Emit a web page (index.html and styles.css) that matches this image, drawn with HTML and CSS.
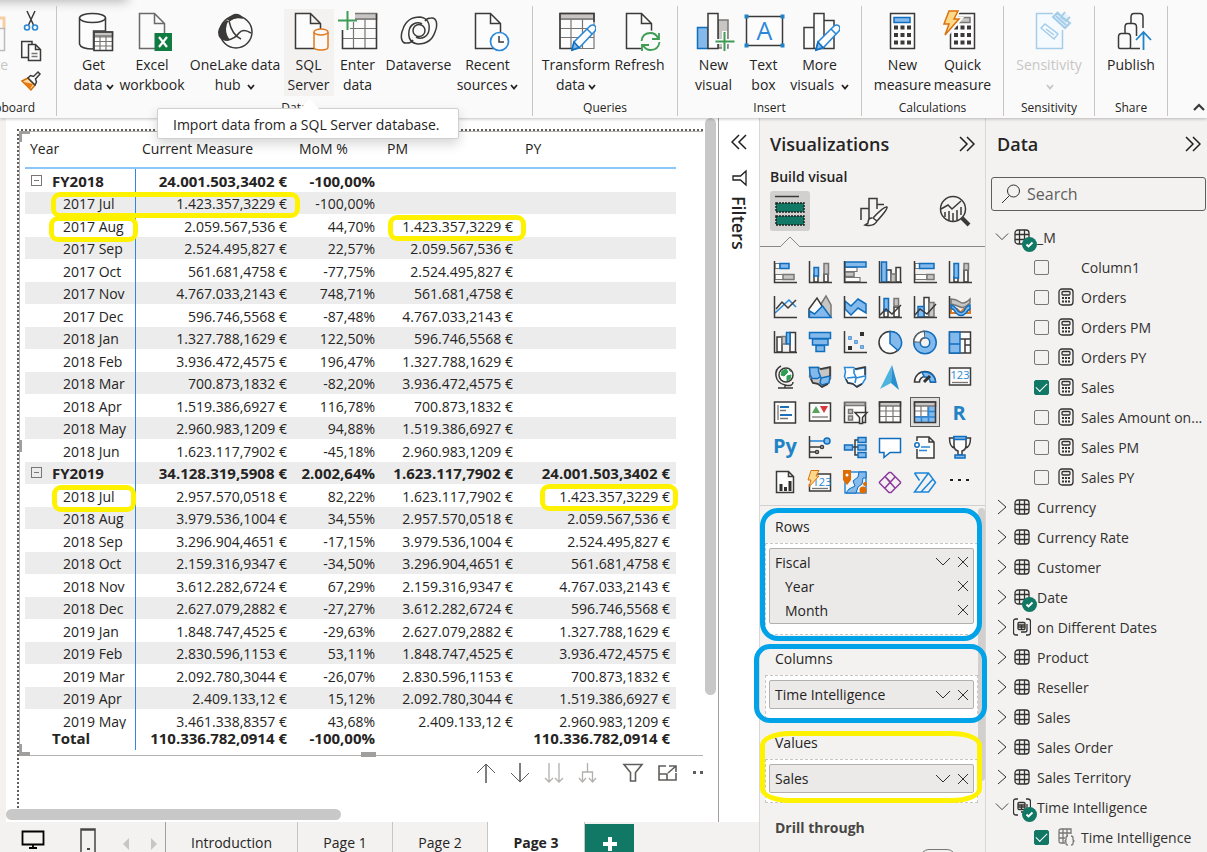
FILE: index.html
```html
<!DOCTYPE html>
<html lang="en">
<head>
<meta charset="utf-8">
<title>Power BI report</title>
<link rel="stylesheet" href="styles.css">
</head>
<body>
<svg class="defs" width="0" height="0" aria-hidden="true">
  <symbol id="page" viewBox="0 0 40 40"><path d="M7.5 1.5h15l10 10v25h-25zM22.5 1.5v10h10" class="k w"/></symbol>
  <symbol id="pencil" viewBox="0 0 40 40"><path d="M16 38l2-8L34 14q3-2 5 0t0 5L23 36z" class="blue w"/><path d="M16 38l2-8 5 5.500z" class="b"/><path d="M31 17l5 5" class="blue"/></symbol>
  <symbol id="table" viewBox="0 0 16 16"><rect x="1" y="1" width="14" height="14" rx="3" class="t"/><path d="M5.500 1v14M10.500 1v14M1 5.500h14M1 10.500h14" class="t"/></symbol>
  <symbol id="calc" viewBox="0 0 16 18"><rect x="1" y="1" width="14" height="16" rx="3" class="t"/><rect x="4" y="3.500" width="8" height="3.500" rx="1" class="t"/><path d="M4 10h2M7 10h2M10 10h2M4 13.500h2M7 13.500h2M10 13.500h2" class="t dots"/></symbol>
  <symbol id="group" viewBox="0 0 18 18"><path d="M5 1H3q-2.500 0-2.500 2.500v11Q.500 17 3 17h2M13 1h2q2.500 0 2.500 2.500v11q0 2.500-2.500 2.500h-2" class="t"/><rect x="5" y="4.500" width="7" height="7" rx="1" class="t"/><path d="M5 7h7M5 9h7M8.500 7v5M14 6v6q0 2-2 2H8" class="t"/></symbol>
  <symbol id="badge" viewBox="0 0 15 15"><circle cx="7.500" cy="7.500" r="7.500" fill="#117865"/><path d="M4.500 7.500l2 2 4-4" fill="none" stroke="#fff" stroke-width="1.800"/></symbol>
  <symbol id="right" viewBox="0 0 14 18"><path d="M3 2l8 7-8 7" class="thin"/></symbol>
  <symbol id="down" viewBox="0 0 16 12"><path d="M1 2l7 7 7-7" class="thin"/></symbol>
  <symbol id="close" viewBox="0 0 12 12"><path d="M1 1l10 10M11 1L1 11" class="thin"/></symbol>
  <symbol id="forward" viewBox="0 0 16 16"><path d="M1 1l7 7-7 7M8 1l7 7-7 7" fill="none" stroke="#201f1e" stroke-width="1.500"/></symbol>
  <symbol id="caret" viewBox="0 0 8 6"><path d="M1 1l3 3.500L7 1" fill="none" stroke="currentColor" stroke-width="1.800"/></symbol>
  <symbol id="axes" viewBox="0 0 24 24"><path d="M1.500 1v21.500H24" class="k"/></symbol>
</svg>

<header class="ribbon">
  <section class="group clip">
    <div class="tools">
      <button class="paste" disabled><svg class="big" viewBox="0 0 40 40"><path d="M2 6h32v12M2 6v28" fill="none" stroke="#f5cfa3" stroke-width="3"/><path d="M24 16.500h10.500v22H18v-22z" fill="#fafafa" stroke="#bbb" stroke-width="1.500"/></svg><span>Paste</span></button>
      <div class="small-tools">
        <button aria-label="Cut"><svg width="20" height="22" viewBox="0 0 20 22"><path d="M6 1l6.500 14M14 1L7.500 15" class="k"/><circle cx="6" cy="17.500" r="2.500" class="blue"/><circle cx="14" cy="17.500" r="2.500" class="blue"/></svg></button>
        <button aria-label="Copy"><svg width="20" height="22" viewBox="0 0 20 22"><path d="M7 17.500H.700V1.500H11v3" class="k"/><path d="M7.500 4.500h7l5 5v11h-12zM14.500 4.500v5h5" class="k w"/><path d="M10.500 13.500h6M10.500 16.500h6" class="gr"/></svg></button>
        <button aria-label="Format painter"><svg width="20" height="22" viewBox="0 0 20 22"><path d="M1 11l6-3 7 7-4 5z" fill="#fbd9a8" stroke="#d86c00" stroke-width="1.500"/><path d="M3 12l9 2-3 5z" fill="#e87a10"/><path d="M7 8l2.500-2.500 3 1L17 2l2 2-4.500 5 1 3L14 15z" class="k w"/></svg></button>
      </div>
    </div>
    <h2>Clipboard</h2>
  </section>
  <section class="group data-group">
    <div class="tools">
      <button class="w48"><svg class="big" viewBox="0 0 40 40"><path d="M5.500 6v26c1 4 6 5 14 5V19h12V6" class="k w"/><ellipse cx="18.500" cy="6" rx="13" ry="4.500" class="k w"/><path d="M20 20h18.500v18.500H20zM20 25h18.500M20 29.500h18.500M20 34h18.500M26 24v14M32 24v14" class="kg w"/><path d="M20 20h18.500v4H20z" class="g"/><path d="M20 20h18.500v18.500H20z" class="k"/></svg><span>Get<br>data<svg class="caret"><use href="#caret"/></svg></span></button>
      <button class="w69"><svg class="big" viewBox="0 0 40 40"><g class="lite"><use href="#page" width="40" height="40"/></g><rect x="22.500" y="21" width="17.500" height="18" fill="#107c41"/><path d="M27 25l8 10M35 25l-8 10" stroke="#fff" stroke-width="2.200"/></svg><span>Excel<br>workbook</span></button>
      <button class="w97"><svg class="big" viewBox="0 0 40 40"><circle cx="21" cy="20" r="16" class="k"/><path d="M12 8Q4 13 3 20q0 8 8 9 2 0 4-1-4-5-4-11 0-5 3-9zM12 8q2-4 7-6 6-1 9 4-8-1-14 4z" fill="#3b3a39"/><path d="M14 9q3 14 12 18M12 28q8-1 12-7 4-5 12 0M14 9q5-5 14-3" class="k"/></svg><span>OneLake data<br>hub <svg class="caret"><use href="#caret"/></svg></span></button>
      <button class="w50 hover"><svg class="big" viewBox="0 0 40 40"><use href="#page" width="40" height="40" x="-1"/><path d="M25 20v15c0 4 14 4 14 0V20" fill="#faf9f8" stroke="#e07a1f" stroke-width="1.500"/><ellipse cx="32" cy="20" rx="7" ry="3" fill="#faf9f8" stroke="#e07a1f" stroke-width="1.500"/></svg><span>SQL<br>Server</span></button>
      <button class="w48"><svg class="big" viewBox="0 0 40 40"><path d="M4.500 1.500h34v35h-34zM4.500 7h34M4.500 16.500h34M4.500 26.500h34M15.500 7v29M27 7v29" class="kg w"/><path d="M4.500 1.500h34V7h-34z" class="g"/><path d="M4.500 10v26.500h34v-35" class="k"/><path d="M0-3h17v13h-5v8H3V10H0z" fill="#fafafa"/><path d="M9.500-1v19M0 8.500h19" stroke="#3f9c55" stroke-width="2"/></svg><span>Enter<br>data</span></button>
      <button class="w74"><svg class="big" viewBox="0 0 40 40"><circle cx="20" cy="18.500" r="6" class="k"/><path d="M8 31C2 32 1 24 4 17 7 8 14 5 21 5c7 1 10 6 9 13-1 7-8 10-13 7M32 6c6-1 7 7 4 14-3 9-10 12-17 12-7-1-10-6-9-13 1-7 8-10 13-7M8 31q4 0 6-3M32 6q-4 0-6 3" class="k"/></svg><span>Dataverse</span></button>
      <button class="w64"><svg class="big" viewBox="0 0 40 40"><use href="#page" width="40" height="40"/><circle cx="31.500" cy="29.500" r="9" fill="#fff" stroke="#2b88d8" stroke-width="1.700"/><path d="M31 24v6h5" class="k"/></svg><span>Recent<br>sources<svg class="caret"><use href="#caret"/></svg></span></button>
    </div>
    <h2>Data</h2>
    <div class="tooltip" role="tooltip">Import data from a SQL Server database.</div>
  </section>
  <section class="group g145">
    <div class="tools">
      <button class="w69"><svg class="big" viewBox="0 0 40 40"><path d="M4 1.500h34v35H4zM4 7h34M4 16.500h34M4 25.500h34M15 7v29M26.500 7v29" class="kg w"/><path d="M4 1.500h34V7H4z" class="g"/><path d="M38 10V1.500H4v35h14" class="k"/><use href="#pencil" width="40" height="40"/></svg><span>Transform<br>data<svg class="caret"><use href="#caret"/></svg></span></button>
      <button class="w58"><svg class="big" viewBox="0 0 40 40"><use href="#page" width="40" height="40" x="-1"/><circle cx="30" cy="29.500" r="11" fill="#fafafa"/><path d="M21.500 29q1-8 9-8 5 0 7.500 5M39 21v6h-7M39.500 30q-1 8-9 8-5 0-7.500-5M22 39v-6h7" fill="none" stroke="#3f9c55" stroke-width="1.800"/></svg><span>Refresh</span></button>
    </div>
    <h2>Queries</h2>
  </section>
  <section class="group g184">
    <div class="tools">
      <button class="w50"><svg class="big" viewBox="0 0 40 40"><path d="M3.500 15.500H14v21H3.500z" class="b"/><path d="M24 8h10v28H24z" class="g"/><path d="M14 1.500h10v35H14z" class="k w"/><path d="M21 29.500h20M30.500 19v22" stroke="#fafafa" stroke-width="5"/><path d="M21.500 29.500h19M30.500 20v19" stroke="#3f9c55" stroke-width="2"/></svg><span>New<br>visual</span></button>
      <button class="w50"><svg class="big" viewBox="0 0 40 40"><path d="M2.500 4.500h36v29h-36z" class="k w"/><text x="20.500" y="28" text-anchor="middle" class="letter">A</text><path d="M.500 2.500h4v4h-4zM36.500 2.500h4v4h-4zM.500 31.500h4v4h-4zM36.500 31.500h4v4h-4z" fill="#1e83c9"/></svg><span>Text<br>box</span></button>
      <button class="w62"><svg class="big" viewBox="0 0 40 40"><path d="M4 15.500h10v21H4zM24 8.500h10v28H24zM14 1.500h10v35H14z" class="k w"/><use href="#pencil" width="40" height="40"/></svg><span>More<br>visuals <svg class="caret"><use href="#caret"/></svg></span></button>
    </div>
    <h2>Insert</h2>
  </section>
  <section class="group g142">
    <div class="tools">
      <button class="w60"><svg class="big" viewBox="0 0 40 40"><path d="M7.500 1.500h24v35h-24z" class="k w"/><path d="M11 5.500h16v5H11z" class="b"/><path d="M11 15.500h17M11 23h17M11 30.500h17" class="keys"/></svg><span>New<br>measure</span></button>
      <button class="w60"><svg class="big" viewBox="0 0 40 40"><path d="M7.500 1.500h24v35h-24z" class="k w"/><path d="M15 5.500h12v5H15z" class="g"/><path d="M11 15.500h17M11 23h17M11 30.500h17" class="keys"/><path d="M5-1h10l-4 8h6L2 25l4-12H0z" fill="#ffd98a" stroke="#fafafa" stroke-width="4"/><path d="M6-1h9l-4 8h5L2 23l4-11H1z" fill="#ffd98a" stroke="#d9730d" stroke-width="1.500"/></svg><span>Quick<br>measure</span></button>
    </div>
    <h2>Calculations</h2>
  </section>
  <section class="group g91">
    <div class="tools">
      <button class="w74" disabled><svg class="big" viewBox="0 0 40 40"><path d="M24 1.500H7.500v35h26V18" fill="#f5faff" stroke="#a5cde9" stroke-width="1.500"/><path d="M12 16l4-4 13 10-4 5zM17 17l8 6" fill="none" stroke="#a5cde9" stroke-width="1.500"/><path d="M24 5l4-4 13 10-5 5zM28 0l4 4M36 0l-4 5 5 4 4-4M27 4l10 9" fill="#e6f2fb" stroke="#a5cde9" stroke-width="2"/></svg><span>Sensitivity<br><svg class="caret"><use href="#caret"/></svg></span></button>
    </div>
    <h2>Sensitivity</h2>
  </section>
  <section class="group g73">
    <div class="tools">
      <button class="w60"><svg class="big" viewBox="0 0 40 40"><path d="M20 11V5q0-3.500 3-3.500h6q3 0 3 3.500v11M14 21v-6q0-3.500 3-3.500h5q3.500 0 3.500 3.500v9M7.500 35V25q0-3.500 3-3.500h6q3 0 3 3.500v10q0 1.500-1.500 1.500h-9q-1.500 0-1.500-1.500zM19 36.500h10" class="k"/><path d="M32.500 38V21M25 28l7.500-8 7.500 8" fill="none" stroke="#1e83c9" stroke-width="1.800"/></svg><span>Publish</span></button>
    </div>
    <h2>Share</h2>
  </section>
  <button class="collapse" aria-label="Collapse ribbon"><svg width="12" height="8" viewBox="0 0 12 8"><path d="M1 7l5-5 5 5" fill="none" stroke="#3b3a39" stroke-width="2.200"/></svg></button>
</header>

<main class="workspace">
  <div class="report">
    <div class="stage">
      <div class="canvas">
        <div class="sheet">
          <div class="visual">
            <table class="matrix">
              <colgroup><col class="c-year"><col class="c-cur"><col class="c-mom"><col class="c-pm"><col></colgroup>
              <thead><tr><th>Year</th><th>Current Measure</th><th>MoM %</th><th>PM</th><th>PY</th></tr></thead>
              <tbody>
                <tr class="year"><th><button class="minus" aria-label="Collapse FY2018"></button>FY2018</th><td>24.001.503,3402 €</td><td>-100,00%</td><td></td><td></td></tr>
                <tr><th>2017 Jul</th><td>1.423.357,3229 €</td><td>-100,00%</td><td></td><td></td></tr>
                <tr><th>2017 Aug</th><td>2.059.567,536 €</td><td>44,70%</td><td>1.423.357,3229 €</td><td></td></tr>
                <tr><th>2017 Sep</th><td>2.524.495,827 €</td><td>22,57%</td><td>2.059.567,536 €</td><td></td></tr>
                <tr><th>2017 Oct</th><td>561.681,4758 €</td><td>-77,75%</td><td>2.524.495,827 €</td><td></td></tr>
                <tr><th>2017 Nov</th><td>4.767.033,2143 €</td><td>748,71%</td><td>561.681,4758 €</td><td></td></tr>
                <tr><th>2017 Dec</th><td>596.746,5568 €</td><td>-87,48%</td><td>4.767.033,2143 €</td><td></td></tr>
                <tr><th>2018 Jan</th><td>1.327.788,1629 €</td><td>122,50%</td><td>596.746,5568 €</td><td></td></tr>
                <tr><th>2018 Feb</th><td>3.936.472,4575 €</td><td>196,47%</td><td>1.327.788,1629 €</td><td></td></tr>
                <tr><th>2018 Mar</th><td>700.873,1832 €</td><td>-82,20%</td><td>3.936.472,4575 €</td><td></td></tr>
                <tr><th>2018 Apr</th><td>1.519.386,6927 €</td><td>116,78%</td><td>700.873,1832 €</td><td></td></tr>
                <tr><th>2018 May</th><td>2.960.983,1209 €</td><td>94,88%</td><td>1.519.386,6927 €</td><td></td></tr>
                <tr><th>2018 Jun</th><td>1.623.117,7902 €</td><td>-45,18%</td><td>2.960.983,1209 €</td><td></td></tr>
                <tr class="year"><th><button class="minus" aria-label="Collapse FY2019"></button>FY2019</th><td>34.128.319,5908 €</td><td>2.002,64%</td><td>1.623.117,7902 €</td><td>24.001.503,3402 €</td></tr>
                <tr><th>2018 Jul</th><td>2.957.570,0518 €</td><td>82,22%</td><td>1.623.117,7902 €</td><td>1.423.357,3229 €</td></tr>
                <tr><th>2018 Aug</th><td>3.979.536,1004 €</td><td>34,55%</td><td>2.957.570,0518 €</td><td>2.059.567,536 €</td></tr>
                <tr><th>2018 Sep</th><td>3.296.904,4651 €</td><td>-17,15%</td><td>3.979.536,1004 €</td><td>2.524.495,827 €</td></tr>
                <tr><th>2018 Oct</th><td>2.159.316,9347 €</td><td>-34,50%</td><td>3.296.904,4651 €</td><td>561.681,4758 €</td></tr>
                <tr><th>2018 Nov</th><td>3.612.282,6724 €</td><td>67,29%</td><td>2.159.316,9347 €</td><td>4.767.033,2143 €</td></tr>
                <tr><th>2018 Dec</th><td>2.627.079,2882 €</td><td>-27,27%</td><td>3.612.282,6724 €</td><td>596.746,5568 €</td></tr>
                <tr><th>2019 Jan</th><td>1.848.747,4525 €</td><td>-29,63%</td><td>2.627.079,2882 €</td><td>1.327.788,1629 €</td></tr>
                <tr><th>2019 Feb</th><td>2.830.596,1153 €</td><td>53,11%</td><td>1.848.747,4525 €</td><td>3.936.472,4575 €</td></tr>
                <tr><th>2019 Mar</th><td>2.092.780,3044 €</td><td>-26,07%</td><td>2.830.596,1153 €</td><td>700.873,1832 €</td></tr>
                <tr><th>2019 Apr</th><td>2.409.133,12 €</td><td>15,12%</td><td>2.092.780,3044 €</td><td>1.519.386,6927 €</td></tr>
                <tr class="cut"><th><span>2019 May</span></th><td><span>3.461.338,8357 €</span></td><td><span>43,68%</span></td><td><span>2.409.133,12 €</span></td><td><span>2.960.983,1209 €</span></td></tr>
              </tbody>
              <tfoot><tr><th>Total</th><td>110.336.782,0914 €</td><td>-100,00%</td><td></td><td>110.336.782,0914 €</td></tr></tfoot>
            </table>
            <i class="handle tl"></i><i class="handle bl"></i><i class="handle bm"></i><i class="handle lm"></i>
            <i class="mark m1"></i><i class="mark m2"></i><i class="mark m3"></i><i class="mark m4"></i><i class="mark m5"></i>
          </div>
          <div class="visual-tools">
            <button aria-label="Drill up"><svg width="20" height="20" viewBox="0 0 20 20"><path d="M10 20V1" class="arr2"/><path d="M1 10l9-9 9 9" class="arr"/></svg></button>
            <button aria-label="Drill down"><svg width="20" height="20" viewBox="0 0 20 20"><path d="M10 0v19" class="arr2"/><path d="M1 10l9 9 9-9" class="arr"/></svg></button>
            <button aria-label="Next level"><svg width="20" height="20" viewBox="0 0 20 20"><path d="M5 0v19M15 0v19M1 15l4 4 4-4M11 15l4 4 4-4" class="arr pale"/></svg></button>
            <button aria-label="Expand all"><svg width="20" height="20" viewBox="0 0 20 20"><path d="M9.500 0v9M4.500 19V9h10v10M1 15l3.500 4L8 15M11 15l3.500 4 3.500-4" class="arr pale"/></svg></button>
            <button aria-label="Filters" class="gap"><svg width="20" height="20" viewBox="0 0 20 20"><path d="M1 1.500h18l-6.500 8V18h-5V9.500z" class="arr2"/></svg></button>
            <button aria-label="Focus mode"><svg width="20" height="20" viewBox="0 0 20 20"><path d="M9 3H2v14h17v-7M2 11h8v6M12 3h7v6M19 3l-8 7" class="arr2"/></svg></button>
            <button aria-label="More options"><svg width="20" height="20" viewBox="0 0 20 20"><path d="M2 9.500h3M9 9.500h3M16 9.500h3" stroke="#605e5c" stroke-width="3"/></svg></button>
          </div>
        </div>
        <div class="vscroll"><i></i></div>
        <div class="hscroll"><i></i></div>
      </div>
      <aside class="filters">
        <button aria-label="Expand filters"><svg class="flip" width="16" height="16"><use href="#forward"/></svg></button>
        <svg width="16" height="16" viewBox="0 0 16 16"><path d="M15 1v14L9.500 10H2V6h7.500z" fill="none" stroke="#201f1e" stroke-width="1.300"/></svg>
        <h2>Filters</h2>
      </aside>
    </div>
    <nav class="pages">
      <button class="view" aria-label="Desktop layout"><svg width="24" height="20" viewBox="0 0 24 20"><path d="M1.500 1.500h21v13h-21zM12 15v3M8 18h8" fill="none" stroke="#000" stroke-width="1.800"/></svg></button>
      <button class="view phone" aria-label="Mobile layout"><svg width="16" height="26" viewBox="0 0 16 26"><path d="M1 1h14v24H1zM1 2h14" fill="none" stroke="#484644" stroke-width="1.500"/><path d="M7 21h3" stroke="#484644" stroke-width="2"/></svg></button>
      <button class="step" aria-label="Previous page"><svg width="6" height="12" viewBox="0 0 6 12"><path d="M6 0v12L0 6z" fill="#c8c6c4"/></svg></button>
      <button class="step" aria-label="Next page"><svg width="6" height="12" viewBox="0 0 6 12"><path d="M0 0v12l6-6z" fill="#c8c6c4"/></svg></button>
      <a class="tab intro" href="#introduction">Introduction</a>
      <a class="tab" href="#page1">Page 1</a>
      <a class="tab" href="#page2">Page 2</a>
      <a class="tab current" href="#page3">Page 3</a>
      <button class="add" aria-label="New page"><svg width="14" height="14" viewBox="0 0 14 14"><path d="M7 0v14M0 7h14" stroke="#fff" stroke-width="4"/></svg></button>
    </nav>
  </div>

  <aside class="panel viz">
    <header class="panel-head"><h1>Visualizations</h1><button aria-label="Collapse"><svg width="16" height="16"><use href="#forward"/></svg></button></header>
    <h2 class="sub">Build visual</h2>
    <div class="modes">
      <button class="on" aria-label="Build visual"><svg width="40" height="40" viewBox="0 0 40 40"><path d="M5 5.500h24" class="k"/><path d="M6 12h28v9H6zM6 25h28v9H6z" fill="#117865" stroke="#201f1e" stroke-width="1.500" stroke-dasharray="2 1"/></svg></button>
      <button aria-label="Format visual"><svg width="40" height="40" viewBox="0 0 40 40"><path d="M8 29V17.500h8V31M16 23V7.500h8V18M24 13.500h7" class="k"/><path d="M34 16q1 2-10 14l-4-3Q31 15 34 16zM19 27q-4 0-4 5l-3 2q9 2 12-4" class="k w"/></svg></button>
      <button aria-label="Analytics"><svg width="40" height="40" viewBox="0 0 40 40"><circle cx="18" cy="18" r="12.500" class="k"/><path d="M6 18l7-4 4 4 9-8M10 21v5M14 20v9M18 22v8M22 19v10M26 16v8" class="k"/><path d="M27 27l7 7" stroke="#3b3a39" stroke-width="4"/></svg></button>
      <svg class="notch" width="22" height="11" viewBox="0 0 22 11"><path d="M0 10.500h1.500L11 1l9.500 9.500H22" fill="#f3f2f1" stroke="#8a8886"/><path d="M2 10.500h18" stroke="#f3f2f1"/></svg>
    </div>
    <div class="gallery">
      <button aria-label="Stacked bar chart"><svg viewBox="0 0 24 24"><path d="M2 3.500h5v5H2zM2 14.500h9v5H2z" class="kg w"/><path d="M7 3.500h9v5H7z" class="b"/><path d="M10 14.500h11v5H10z" class="g"/><use href="#axes"/></svg></button>
      <button aria-label="Stacked column chart"><svg viewBox="0 0 24 24"><path d="M6 15h4v7H6zM16 14h4v8h-4z" class="k w"/><path d="M6 7.500h4.500V16H6z" class="b"/><path d="M16 3.500h4.500V14H16z" class="g"/><use href="#axes"/></svg></button>
      <button aria-label="Clustered bar chart"><svg viewBox="0 0 24 24"><path d="M2 7.500h12v4H2zM2 17.500h15v4H2z" class="kg w"/><path d="M2 2h21v5H2z" class="b"/><path d="M2 12h9v4.500H2z" class="g"/><use href="#axes"/></svg></button>
      <button aria-label="Clustered column chart"><svg viewBox="0 0 24 24"><path d="M8.500 10H13v12H8.500zM18 7.500h4.500V22H18z" class="k w"/><path d="M3.500 2h5v20h-5z" class="b"/><path d="M13 14h4.500v8H13z" class="g"/><use href="#axes"/></svg></button>
      <button aria-label="100% stacked bar chart"><svg viewBox="0 0 24 24"><path d="M2 3.500h5v5H2zM2 14.500h12v5H2z" class="kg w"/><path d="M6.500 3.500H21v5H6.500z" class="b"/><path d="M14 14.500h7v5h-7z" class="g"/><use href="#axes"/></svg></button>
      <button aria-label="100% stacked column chart"><svg viewBox="0 0 24 24"><path d="M6 17h4v5H6zM16 10h4v12h-4z" class="k w"/><path d="M6 3.500h4.500V18H6z" class="b"/><path d="M16 3.500h4.500V10H16z" class="g"/><use href="#axes"/></svg></button>

      <button aria-label="Line chart"><svg viewBox="0 0 24 24"><path d="M2 18L16 5l7 7" class="blue"/><path d="M3 14l6-7 6 6 8-8" class="k"/><use href="#axes"/></svg></button>
      <button aria-label="Area chart"><svg viewBox="0 0 24 24"><path d="M13 22V9l5-8 5 9v12z" class="g"/><path d="M1 14L9 3l12 19H1z" class="k w"/><path d="M1.500 16l5 3 8-8 8.500 11.500H1.500z" class="b"/></svg></button>
      <button aria-label="Stacked area chart"><svg viewBox="0 0 24 24"><path d="M2 15l6 6 7-7 8 6v2H2z" class="w"/><path d="M2 6l6 5 7-7 8 5v9l-8-5-7 7-6-6z" class="b"/><use href="#axes"/></svg></button>
      <button aria-label="Line and stacked column chart"><svg viewBox="0 0 24 24"><path d="M6 14h4v8H6zM16 12h5v10h-5z" class="k w"/><path d="M6 3.500h4.500V16H6z" class="b"/><path d="M16 3.500h4.500V11H16z" class="g"/><path d="M2 20l6-6 6 5 9-9" class="k"/><use href="#axes"/></svg></button>
      <button aria-label="Line and clustered column chart"><svg viewBox="0 0 24 24"><path d="M11 2.500h5V22h-5z" class="k w"/><path d="M5 11.500h6V22H5z" class="b"/><path d="M16 7.500h5V22h-5z" class="g"/><path d="M2 20l5-6 7 5 9-10" class="k"/><use href="#axes"/></svg></button>
      <button aria-label="Ribbon chart"><svg viewBox="0 0 24 24"><path d="M3 14h6l4 4h9v-4h-6l-4 4H3z" fill="#fff" stroke="#e07a1f" stroke-width="2"/><path d="M3 4q5 0 9 3t10-3v4q-6 6-10 4T3 9z" class="g"/><path d="M3 10q4 1 7 6 3 3 6 0 2-5 6-6v4q-2 1-4 4-5 5-10 0-2-4-5-5z" class="b"/><use href="#axes"/></svg></button>

      <button aria-label="Waterfall chart"><svg viewBox="0 0 24 24"><path d="M4 7h5v15H4zM17 2.500h5.500V22H17z" class="k w"/><path d="M9 6.500h4V14H9z" class="g"/><path d="M13.500 2.500H17V14h-3.500z" class="b"/><use href="#axes"/></svg></button>
      <button aria-label="Funnel chart"><svg viewBox="0 0 24 24"><path d="M1.500 2.500h21v6h-21zM4.500 9h15.500v6H4.500zM8 15.500h8.500v6H8z" class="b"/></svg></button>
      <button aria-label="Scatter chart"><svg viewBox="0 0 24 24"><path d="M17 2h4v4h-4zM5 16h4v4H5z" fill="#323130"/><path d="M5.500 6.500h3v3h-3zM11.500 10.500h3v3h-3zM17.500 15.500h3v3h-3z" class="b soft"/><use href="#axes"/></svg></button>
      <button aria-label="Pie chart"><svg viewBox="0 0 24 24"><circle cx="12" cy="12.500" r="11" class="k w"/><path d="M12 1.500a11 11 0 0 1 8 19l-8-7z" class="b"/></svg></button>
      <button aria-label="Donut chart"><svg viewBox="0 0 24 24"><circle cx="12" cy="12.500" r="8" fill="none" stroke="#106ebe" stroke-width="8"/><circle cx="12" cy="12.500" r="8" fill="none" stroke="#83b9eb" stroke-width="5"/><path d="M4 12.500A8 8 0 0 1 12 4.500" fill="none" stroke="#605e5c" stroke-width="8"/><path d="M4 11.500A8 8 0 0 1 11 4.500" fill="none" stroke="#fff" stroke-width="5"/></svg></button>
      <button aria-label="Treemap"><svg viewBox="0 0 24 24"><path d="M1.500 2h21v21h-21zM12 9h11M17 9v14M17 15h6" class="k w"/><path d="M1.500 2H12v12H1.500zM1.500 14H12v9H1.500z" class="b"/></svg></button>

      <button aria-label="Map"><svg viewBox="0 0 24 24"><circle cx="13" cy="10" r="7" class="k w"/><path d="M9 6l4-2 2 3-4 4-3-1zM14 11l4-1-1 4-3 2zM16 5l2 2" fill="#2f9e52" stroke="#2f9e52"/><path d="M8 1Q2 4 3 11t9 9 8-3M12 20v3M5 23h15" class="k"/></svg></button>
      <button aria-label="Filled map"><svg viewBox="0 0 24 24"><path d="M1.500 2.500h9l3 2 9-2v11l-3 5-6 3-4-3-5-1-3-6 1-5z" class="g"/><path d="M1.500 2.500h9v4l2 5-3 2H4l-2-4zM13 13l9-2-1 7-7 2-2-2z" class="b"/><path d="M3 14l2 4 5 1 4 3 6-3M12 4l10-2v9" class="k"/></svg></button>
      <button aria-label="Shape map"><svg viewBox="0 0 24 24"><path d="M1.500 2.500h9l3 2 9-2v11l-3 5-6 3-4-3-5-1-3-6 1-5z" fill="#fff" stroke="#2b88d8" stroke-width="1.500"/><path d="M3 14l2 4 5 1 4 3 5-3M12 4l10-2v8" class="k"/><path d="M11 4v4l2 4-9 1M13 13l9-2M13 13l-1 5" class="blue"/></svg></button>
      <button aria-label="Azure map"><svg viewBox="0 0 24 24"><path d="M14 0L2 24l11-6z" fill="#4bb3dd"/><path d="M14 0l-1 18 8 7z" fill="#2a8fce"/></svg></button>
      <button aria-label="Gauge"><svg viewBox="0 0 24 24"><path d="M1.500 17a10.500 10.500 0 0 1 21 0h-5a5.500 5.500 0 0 0-11 0z" class="k w"/><path d="M9 7.500a10.500 10.500 0 0 1 13.500 9.500h-5a5.500 5.500 0 0 0-6-5z" class="b"/><path d="M11 17l6-6" stroke="#323130" stroke-width="3"/></svg></button>
      <button aria-label="Card"><svg viewBox="0 0 24 24"><path d="M1.500 3h21v17h-21z" class="k w"/><text x="12" y="14" text-anchor="middle" class="num">123</text><path d="M4 17.500h16" class="gr"/></svg></button>

      <button aria-label="Multi-row card"><svg viewBox="0 0 24 24"><path d="M1.500 2h21v21h-21z" class="k w"/><path d="M5 5v15" class="gr"/><path d="M7 7h9M7 15h12" stroke="#1e70bf" stroke-width="2"/><path d="M7 10.500h6M7 18.500h8" class="gr"/></svg></button>
      <button aria-label="KPI"><svg viewBox="0 0 24 24"><path d="M1.500 3h21v18h-21z" class="k w"/><path d="M4 13l4-7 4 7z" fill="#57a35c"/><path d="M12 6h8l-4 7z" fill="#d9363e"/><path d="M4 17h16" class="gr"/></svg></button>
      <button aria-label="Slicer"><svg viewBox="0 0 24 24"><path d="M1.500 2.500h21v20h-21z" class="k w"/><path d="M2 2.500h20v3H2z" class="g"/><path d="M5.500 9.500h4v4h-4zM5.500 16h4v4h-4z" class="g"/><path d="M12 12.500h12l-4.500 5v6h-3v-6z" class="k w"/></svg></button>
      <button aria-label="Table"><svg viewBox="0 0 24 24"><path d="M1.500 2h21v20h-21zM8 5v17M15 5v17M1 11h22M1 16.500h22" class="kg w"/><path d="M1.500 2h21v4h-21z" class="g"/><path d="M1.500 2h21v20.500h-21z" class="k"/></svg></button>
      <button class="picked" aria-label="Matrix"><svg viewBox="0 0 24 24"><path d="M1.500 2h21v20h-21zM8 5v17M15 5v17M1 11h22M1 16.500h22" class="kg w"/><path d="M15 6h7.500v16.500h-21V17H15z" fill="#83b9eb"/><path d="M15.500 6v16M8.500 17v5M15 11.500h7M2 17h20" class="blue"/><path d="M1.500 2h21v4h-21z" class="g"/><path d="M1.500 2h21v20.500h-21z" class="k"/></svg></button>
      <button aria-label="R script visual"><svg viewBox="0 0 24 24"><text x="11" y="20" text-anchor="middle" class="script">R</text></svg></button>

      <button aria-label="Python visual"><svg viewBox="0 0 24 24"><text x="12" y="18" text-anchor="middle" class="script">Py</text></svg></button>
      <button aria-label="Key influencers"><svg viewBox="0 0 24 24"><path d="M2 6h16" class="blue"/><circle cx="19" cy="6" r="3" class="b"/><path d="M2 12h11M2 17h6" class="k"/><circle cx="14" cy="12" r="1.500" class="k w"/><circle cx="9" cy="17" r="1.500" class="k w"/><use href="#axes"/></svg></button>
      <button aria-label="Decomposition tree"><svg viewBox="0 0 24 24"><path d="M9 12h6M15 5h-3v15h3" class="k"/><path d="M1.500 10h8v5h-8zM15 2.500h8v5h-8zM15 10h8v5h-8zM15 17.500h8v5h-8z" class="b"/></svg></button>
      <button aria-label="Q&amp;A"><svg viewBox="0 0 24 24"><path d="M1.500 3.500h21v14H12l-6 5v-5H1.500z" fill="#fff" stroke="#106ebe" stroke-width="1.500"/></svg></button>
      <button aria-label="Smart narrative"><svg viewBox="0 0 24 24"><path d="M4 6V2h12l5 5v16H4V14M16 2v5h5" class="k w"/><circle cx="4" cy="10" r="2.200" fill="#fff" stroke="#106ebe" stroke-width="1.500"/><path d="M8 12h9M6 15.500h8" class="blue"/></svg></button>
      <button aria-label="Goals"><svg viewBox="0 0 24 24"><path d="M6 3H1.500q0 9 5 10M18 3h4.500q0 9-5 10M6 2h12v8q0 5-4 6v4h-4v-4q-4-1-4-6z" class="k w"/><path d="M6 1.500h12v3H6zM7 20h10v3H7z" class="b"/></svg></button>

      <button aria-label="Paginated report"><svg viewBox="0 0 24 24"><path d="M3.500 1.500h12l5 5v16h-17zM15.500 1.500v5h5" class="k w"/><path d="M8 21v-7M12.500 21v-4M17 21V11" stroke="#323130" stroke-width="3"/></svg></button>
      <button aria-label="Card (new)"><svg viewBox="0 0 24 24"><path d="M8 4h14.500v17h-21v-7" class="k w"/><text x="14" y="16" text-anchor="middle" class="num">123</text><path d="M4 18.500h16" class="gr"/><path d="M3 .500h8L8 6h3L1 17l2-7H0z" fill="#ffd98a" stroke="#d9730d"/></svg></button>
      <button aria-label="ArcGIS map"><svg viewBox="0 0 24 24"><path d="M2 2h21v21H2z" fill="#eef6fc" stroke="#2b88d8" stroke-width="1.500"/><path d="M23 2h-7l-1 5-5 4 2 5-6 3-3 4h10l2-6 4-3 1-6h3z" class="b thinb"/><path d="M0 0h8v10l-4 5-4-5z" fill="#e06c00"/><circle cx="4" cy="5" r="1.500" fill="#fff"/><circle cx="20" cy="20" r="3.500" fill="#e06c00"/><circle cx="22" cy="14" r="2" fill="#e06c00"/></svg></button>
      <button aria-label="Power Apps"><svg viewBox="0 0 24 24"><path d="M11 2.500h2l9.500 9.500v1L13 22.500h-2L1.500 13v-1zM7 6.500l10 11.500M17 7L7 18M7 6.500l5 5M12 12.500l5-5.500" fill="none" stroke="#8e3a9d" stroke-width="1.500"/></svg></button>
      <button aria-label="Power Automate"><svg viewBox="0 0 24 24"><path d="M1.500 3h14l7 9.500-7 9.500h-14l14-19M1.500 3l5 7.500M8 22L20 9" fill="none" stroke="#1a86d9" stroke-width="1.500"/></svg></button>
      <button aria-label="More visuals"><svg viewBox="0 0 24 24"><path d="M2 10h3M10 10h3M18 10h3" stroke="#201f1e" stroke-width="2"/></svg></button>
    </div>
    <div class="wells">
      <h3>Rows</h3>
      <div class="well rows">
        <div class="pill">
          <p>Fiscal<button aria-label="Fiscal options"><svg width="16" height="12"><use href="#down"/></svg></button><button aria-label="Remove Fiscal"><svg width="12" height="12"><use href="#close"/></svg></button></p>
          <p class="sub-item">Year<button aria-label="Remove Year"><svg width="12" height="12"><use href="#close"/></svg></button></p>
          <p class="sub-item">Month<button aria-label="Remove Month"><svg width="12" height="12"><use href="#close"/></svg></button></p>
        </div>
      </div>
      <h3>Columns</h3>
      <div class="well"><div class="pill"><p>Time Intelligence<button aria-label="Options"><svg width="16" height="12"><use href="#down"/></svg></button><button aria-label="Remove"><svg width="12" height="12"><use href="#close"/></svg></button></p></div></div>
      <h3>Values</h3>
      <div class="well"><div class="pill"><p>Sales<button aria-label="Options"><svg width="16" height="12"><use href="#down"/></svg></button><button aria-label="Remove"><svg width="12" height="12"><use href="#close"/></svg></button></p></div></div>
      <h3 class="drill">Drill through</h3>
      <button class="toggle" aria-label="Cross-report"></button>
      <i class="bar"></i>
      <i class="mark blue-mark b1"></i><i class="mark blue-mark b2"></i><i class="mark b3"></i>
    </div>
  </aside>

  <aside class="panel data">
    <header class="panel-head"><h1>Data</h1><button aria-label="Collapse"><svg width="16" height="16"><use href="#forward"/></svg></button></header>
    <label class="search"><svg width="20" height="20" viewBox="0 0 20 20"><circle cx="12.500" cy="7" r="6" class="thin"/><path d="M8.500 11.500L1 19" class="thin"/></svg><input type="text" placeholder="Search" aria-label="Search"></label>
    <ul class="tree">
      <li><svg class="arrow" viewBox="0 0 16 12"><use href="#down"/></svg><span class="ico"><svg><use href="#table"/></svg><svg class="badge"><use href="#badge"/></svg></span>_M</li>
      <li class="field"><label><input type="checkbox"><span class="ico"></span>Column1</label></li>
      <li class="field"><label><input type="checkbox"><svg class="calc"><use href="#calc"/></svg>Orders</label></li>
      <li class="field"><label><input type="checkbox"><svg class="calc"><use href="#calc"/></svg>Orders PM</label></li>
      <li class="field"><label><input type="checkbox"><svg class="calc"><use href="#calc"/></svg>Orders PY</label></li>
      <li class="field"><label><input type="checkbox" checked><svg class="calc"><use href="#calc"/></svg>Sales</label></li>
      <li class="field"><label><input type="checkbox"><svg class="calc"><use href="#calc"/></svg>Sales Amount on...</label></li>
      <li class="field"><label><input type="checkbox"><svg class="calc"><use href="#calc"/></svg>Sales PM</label></li>
      <li class="field"><label><input type="checkbox"><svg class="calc"><use href="#calc"/></svg>Sales PY</label></li>
      <li><svg class="arrow" viewBox="0 0 14 18"><use href="#right"/></svg><span class="ico"><svg><use href="#table"/></svg></span>Currency</li>
      <li><svg class="arrow" viewBox="0 0 14 18"><use href="#right"/></svg><span class="ico"><svg><use href="#table"/></svg></span>Currency Rate</li>
      <li><svg class="arrow" viewBox="0 0 14 18"><use href="#right"/></svg><span class="ico"><svg><use href="#table"/></svg></span>Customer</li>
      <li><svg class="arrow" viewBox="0 0 14 18"><use href="#right"/></svg><span class="ico"><svg><use href="#table"/></svg><svg class="badge"><use href="#badge"/></svg></span>Date</li>
      <li><svg class="arrow" viewBox="0 0 14 18"><use href="#right"/></svg><span class="ico"><svg class="wide"><use href="#group"/></svg></span>on Different Dates</li>
      <li><svg class="arrow" viewBox="0 0 14 18"><use href="#right"/></svg><span class="ico"><svg><use href="#table"/></svg></span>Product</li>
      <li><svg class="arrow" viewBox="0 0 14 18"><use href="#right"/></svg><span class="ico"><svg><use href="#table"/></svg></span>Reseller</li>
      <li><svg class="arrow" viewBox="0 0 14 18"><use href="#right"/></svg><span class="ico"><svg><use href="#table"/></svg></span>Sales</li>
      <li><svg class="arrow" viewBox="0 0 14 18"><use href="#right"/></svg><span class="ico"><svg><use href="#table"/></svg></span>Sales Order</li>
      <li><svg class="arrow" viewBox="0 0 14 18"><use href="#right"/></svg><span class="ico"><svg><use href="#table"/></svg></span>Sales Territory</li>
      <li><svg class="arrow" viewBox="0 0 16 12"><use href="#down"/></svg><span class="ico"><svg class="wide"><use href="#group"/></svg><svg class="badge"><use href="#badge"/></svg></span>Time Intelligence</li>
      <li class="field"><label><input type="checkbox" checked><svg class="calc" viewBox="0 0 16 18"><path d="M7 15H3q-2 0-2-2V3q0-2 2-2h10v5M5 1v14M1 5h12M9 1v7M1 10h6M10 8q-2 0-2 2v2l-1 1 1 1v2q0 1 2 1M13 8q2 0 2 2v2l1 1-1 1v2q0 1-2 1" class="gr"/></svg>Time Intelligence</label></li>
    </ul>
  </aside>
</main>
</body>
</html>
```
FILE: styles.css
```css
* { box-sizing: border-box; }
body {
  margin: 0;
  height: 100vh;
  overflow: hidden;
  display: flex;
  flex-direction: column;
  font-family: "Open Sans", "Noto Sans", sans-serif;
  font-size: 14px;
  color: #252423;
  background: #f3f2f1;
}
h1, h2, h3, p, ul { margin: 0; padding: 0; font-size: inherit; font-weight: 400; }
button { font: inherit; color: inherit; background: none; border: 0; padding: 0; }
svg { display: block; overflow: visible; flex: none; }
a { color: inherit; text-decoration: none; }
.defs { position: absolute; }

/* icon strokes */
.k { fill: none; stroke: #3b3a39; stroke-width: 1.5; }
.kg { fill: none; stroke: #797775; stroke-width: 1.2; }
.w { fill: #fcfcfc; }
.b { fill: #83b9eb; stroke: #106ebe; stroke-width: 1.5; }
.thinb { stroke-width: 1; }
.soft { stroke: #5a9bd8; stroke-width: 1; }
.g { fill: #c8c6c4; stroke: #797775; stroke-width: 1.5; }
.gr { fill: none; stroke: #797775; stroke-width: 1.3; }
.blue { fill: none; stroke: #2b88d8; stroke-width: 1.6; }
.blue.w { fill: #fcfcfc; }
.t { fill: none; stroke: #323130; stroke-width: 1.3; }
.dots { stroke-width: 2; }
.thin { fill: none; stroke: #323130; stroke-width: 1; }
.keys { fill: none; stroke: #3b3a39; stroke-width: 4; stroke-dasharray: 4 2.5; }
.lite { opacity: .75; }
.letter { font-size: 25px; fill: #2b88d8; }
.num { font-size: 11px; fill: #2b88d8; }
.script { font-size: 20px; font-weight: 700; fill: #1f83c6; }
.arr { fill: none; stroke: #605e5c; stroke-width: 1; }
.arr2 { fill: none; stroke: #605e5c; stroke-width: 1.6; }
.pale { stroke: #b3b0ad; stroke-width: 1.3; }

/* ribbon */
.ribbon {
  position: relative;
  z-index: 3;
  flex: none;
  display: flex;
  height: 118px;
  padding: 6px 0 2px;
  background: #fafafa;
  box-shadow: 0 1px 3px rgba(0, 0, 0, .25);
}
.ribbon::before {
  content: "";
  position: absolute;
  left: -20px;
  top: -14px;
  width: 146px;
  height: 10px;
  box-shadow: 0 3px 12px 2px rgba(0, 0, 0, .3);
}
.group {
  position: relative;
  flex: none;
  display: flex;
  flex-direction: column;
  border-right: 1px solid #c8c6c4;
  padding-top: 3px;
}
.data-group { width: 476px; }
.g145 { width: 145px; }
.g184 { width: 184px; }
.g142 { width: 142px; }
.g91 { width: 91px; }
.g73 { width: 73px; }
.tools { display: flex; justify-content: center; height: 89px; }
.tools button { display: flex; flex-direction: column; align-items: center; white-space: nowrap; line-height: 20px; padding-top: 3px; flex: none; }
.tools span { margin-top: 3px; text-align: center; }
.tools .hover { background: #f3f2f1; }
.big { width: 40px; height: 40px; }
.w48 { width: 48px; }
.w50 { width: 50px; }
.w58 { width: 58px; }
.w60 { width: 60px; }
.w62 { width: 62px; }
.w64 { width: 64px; }
.w69 { width: 69px; }
.w74 { width: 74px; }
.w97 { width: 97px; }
.caret { display: inline-block; width: 8px; height: 6px; margin-left: 3px; vertical-align: 0; }
.tools button:disabled { color: #c8c6c4; }
.group h2 { font-size: 12px; line-height: 16px; padding-top: 4px; text-align: center; }
.clip { width: 57px; overflow: hidden; }
.clip .tools { justify-content: flex-start; }
.clip .paste { width: 10px; align-items: flex-end; padding-right: 2px; }
.clip .paste .big { margin-right: -2px; }
.clip h2 { display: flex; justify-content: flex-end; padding-right: 21px; }
.small-tools { display: flex; flex-direction: column; gap: 8px; margin-left: 11px; padding-top: 1px; }
.small-tools button { padding: 0; }
.tooltip {
  position: absolute;
  left: 100px;
  top: 102px;
  width: 302px;
  height: 31px;
  padding: 0 15px;
  line-height: 31px;
  white-space: nowrap;
  background: #fff;
  border: 1px solid #d2d0ce;
  border-radius: 2px;
  box-shadow: 0 5px 12px rgba(0, 0, 0, .16);
}
.tooltip::before {
  content: "";
  position: absolute;
  left: 145px;
  top: -7px;
  width: 13px;
  height: 13px;
  background: #fff;
  transform: rotate(45deg);
}
.collapse { margin-left: auto; align-self: flex-end; padding: 0 2px 5px 0; }

/* workspace */
.workspace { flex: 1; min-height: 0; display: grid; grid-template-columns: minmax(0, 1fr) 226px 222px; }
.report { display: flex; flex-direction: column; min-height: 0; }
.stage { flex: 1; min-height: 0; display: flex; }
.canvas {
  flex: 1;
  min-width: 0;
  margin-left: 6px;
  display: grid;
  grid-template-columns: minmax(0, 1fr) 15px;
  grid-template-rows: minmax(0, 1fr) 14px;
  background: #fff;
  border-right: 1px solid #a19f9d;
}
.sheet { margin: 11px 0 0 11px; border: 2px dotted #605e5c; border-width: 2px 0 0 2px; overflow: hidden; }
.vscroll { grid-column: 2; grid-row: 1 / 3; padding-left: 2px; }
.vscroll i { display: block; width: 11px; height: 82%; background: #c8c8c8; border-radius: 6px; }
.hscroll { grid-column: 1; grid-row: 2; padding-top: 1px; }
.hscroll i { display: block; width: 48%; height: 11px; background: #c8c8c8; border-radius: 6px; }

.visual { position: relative; border: 1px solid #b3b0ad; border-right: 0; padding: 0 27px 5px 5px; }
.matrix { width: 100%; table-layout: fixed; border-collapse: separate; border-spacing: 0; line-height: 20px; }
.c-year { width: 111px; }
.c-cur { width: 157px; }
.c-mom { width: 88px; }
.c-pm { width: 138px; }
.matrix th, .matrix td { padding: 0 6px; font-weight: 400; white-space: nowrap; text-align: right; }
.matrix th { text-align: left; }
.matrix thead th { height: 37px; padding-bottom: 2px; border-bottom: 2px solid #8cc6fb; }
.matrix thead th:first-child { padding-left: 5px; }
.matrix tbody tr { height: 23px; }
.matrix tbody tr:nth-child(even) { height: 22px; }
.matrix tbody tr > * { padding-top: 2px; }
.matrix tbody tr:nth-child(even) > * { background: #ececec; }
.matrix tbody th { padding-left: 38px; border-right: 1px solid #2b88e6; }
.matrix tbody .year > *, .matrix tfoot tr > * { font-weight: 700; font-size: 15px; padding-top: 0; }
.matrix tbody .year th { padding-left: 6px; }
.matrix tfoot tr > * { padding-bottom: 2px; line-height: 19px; }
.matrix tfoot th { padding-left: 27px; border-right: 1px solid #2b88e6; height: 21px; }
.matrix tbody .cut { height: 20px; }
.matrix tbody .cut > * { padding-top: 0; }
.cut span { display: block; height: 19px; line-height: 24px; overflow: hidden; }
.minus { width: 11px; height: 11px; margin-right: 10px; border: 1px solid #797775; vertical-align: 2px; background: linear-gradient(#797775, #797775) center / 5px 1px no-repeat; }

.handle { position: absolute; background: #a19f9d; }
.tl { left: -1px; top: -1px; width: 11px; height: 11px; background: none; border: solid #a19f9d; border-width: 3px 0 0 3px; }
.bl { left: -1px; bottom: -1px; width: 11px; height: 12px; background: none; border: solid #a19f9d; border-width: 0 0 4px 3px; }
.bm { left: 341px; bottom: -2px; width: 15px; height: 5px; }
.lm { left: -1px; top: 308px; width: 3px; height: 12px; }

.mark { position: absolute; border: 5px solid #fff200; border-radius: 9px; pointer-events: none; }
.m1 { left: 31px; top: 60px; width: 249px; height: 26px; }
.m2 { left: 29px; top: 84px; width: 89px; height: 26px; }
.m3 { left: 368px; top: 83px; width: 138px; height: 26px; }
.m4 { left: 32px; top: 353px; width: 84px; height: 27px; }
.m5 { left: 520px; top: 352px; width: 138px; height: 27px; }

.visual-tools { display: flex; gap: 14px; justify-content: flex-end; margin: 7px -8px 0 0; }
.visual-tools .gap { margin-left: 11px; }

.filters { width: 40px; background: #fff; display: flex; flex-direction: column; align-items: center; padding-top: 16px; gap: 20px; }
.filters h2 { writing-mode: vertical-rl; font-size: 18px; font-weight: 600; line-height: 24px; margin-top: -10px; }
.flip { transform: scaleX(-1); }

.pages { flex: none; height: 30px; overflow: hidden; display: flex; align-items: flex-start; }
.view { margin: 8px 0 0 21px; }
.phone { margin: 6px 0 0 35px; }
.step { margin: 16px 0 0 22px; }
.phone + .step { margin-left: 27px; }
.tab { width: 95px; height: 42px; line-height: 42px; text-align: center; border-right: 1px solid #c8c6c4; }
.intro { width: 133px; margin-left: 8px; border-left: 1px solid #a19f9d; }
.current { width: 97px; background: #fff; font-weight: 700; }
.add { width: 49px; height: 40px; margin-top: 2px; background: #117865; display: grid; place-items: center; }

/* side panels */
.panel { min-width: 0; min-height: 0; overflow: hidden; border-left: 1px solid #dad8d6; background: #f3f2f1; }
.panel-head { display: flex; justify-content: space-between; align-items: center; height: 49px; padding: 3px 6px 0 11px; }
.panel-head h1 { font-size: 18px; font-weight: 600; }
.viz { position: relative; z-index: 1; overflow: visible; clip-path: inset(0 -4px 0 -8px); }
.viz .panel-head { padding: 3px 10px 0 10px; }
.sub { padding-left: 10px; line-height: 20px; font-weight: 600; }
.modes { position: relative; display: flex; justify-content: space-between; margin-top: 4px; padding: 0 10px 15px; border-bottom: 1px solid #8a8886; }
.modes .on { background: #d2d0ce; border-radius: 3px; }
.notch { position: absolute; left: 19px; bottom: -1px; }
.gallery { display: grid; grid-template-columns: repeat(6, 30px); gap: 5px; padding: 10px 10px 8px; border-bottom: 1px solid #d2d0ce; }
.gallery button { width: 30px; height: 30px; padding: 3px; }
.gallery svg { width: 24px; height: 24px; }
.gallery .picked { background: #e1dfdd; box-shadow: inset 0 0 0 1px #605e5c; }

.wells { position: relative; padding: 0 7px 0 5px; }
.wells h3 { height: 40px; padding: 14px 0 0 10px; line-height: 20px; }
.wells h3:first-child { height: 37px; padding-top: 11px; }
.well { height: 44px; padding: 4px 3px; background: #fff; border: 1px dashed #c8c6c4; }
.rows { height: 92px; }
.pill { border: 1px solid #b3b0ad; border-radius: 2px; background: #ebeae9; padding: 1px 4px 1px 5px; }
.pill p { display: flex; align-items: center; height: 25px; }
.pill button { margin-left: auto; }
.pill button + button { margin-left: 6px; }
.rows .pill p { height: 24px; }
.pill .sub-item { padding-left: 10px; }
.wells .drill { font-weight: 700; color: #484644; padding-top: 15px; height: 46px; }
.toggle { display: block; width: 36px; height: 18px; margin-left: 155px; border: 1px solid #797775; border-radius: 9px; }
.bar { position: absolute; right: 0; top: 2px; width: 7px; height: 273px; background: #d2d0ce; border-radius: 4px; }
.blue-mark { border-color: #00a2e8; z-index: 1; }
.b1 { left: 0; top: 2px; width: 222px; height: 133px; border-radius: 18px; }
.b2 { left: -6px; top: 138px; width: 233px; height: 79px; border-radius: 16px; z-index: 2; }
.b3 { left: 0; top: 225px; width: 222px; height: 72px; border-radius: 30px / 14px; }

.search { display: flex; align-items: center; height: 34px; margin: 10px 1px 0 5px; padding-left: 9px; border: 1px solid #605e5c; border-radius: 3px; }
.search input { flex: 1; min-width: 0; margin-left: 6px; padding: 0; border: 0; background: none; font: inherit; font-size: 16px; outline: 0; }
.search input::placeholder { color: #605e5c; }
.tree { list-style: none; padding-top: 11px; }
.tree li { display: flex; align-items: center; height: 30px; padding-left: 9px; color: #323130; white-space: nowrap; }
.arrow { width: 14px; height: 18px; margin-right: 5px; }
.ico { position: relative; width: 16px; height: 16px; margin-right: 7px; }
.ico svg { width: 16px; height: 16px; }
.ico .wide { width: 18px; height: 18px; margin: -1px; }
.ico .badge { position: absolute; left: 8px; top: 8px; width: 15px; height: 15px; }
.tree .field { padding-left: 48px; }
.field label { display: flex; align-items: center; }
.field input { appearance: none; width: 15px; height: 15px; margin: 0 9px 0 0; border: 1px solid #797775; border-radius: 2px; background: #fff0; }
.field input:checked { background: #117865; border-color: #117865; display: grid; justify-content: center; }
.field input:checked::after { content: ""; width: 10px; height: 5px; margin-top: 2px; border: solid #fff; border-width: 0 0 1px 1px; transform: rotate(-45deg); }
.calc { width: 16px; height: 18px; margin-right: 7px; }
```
